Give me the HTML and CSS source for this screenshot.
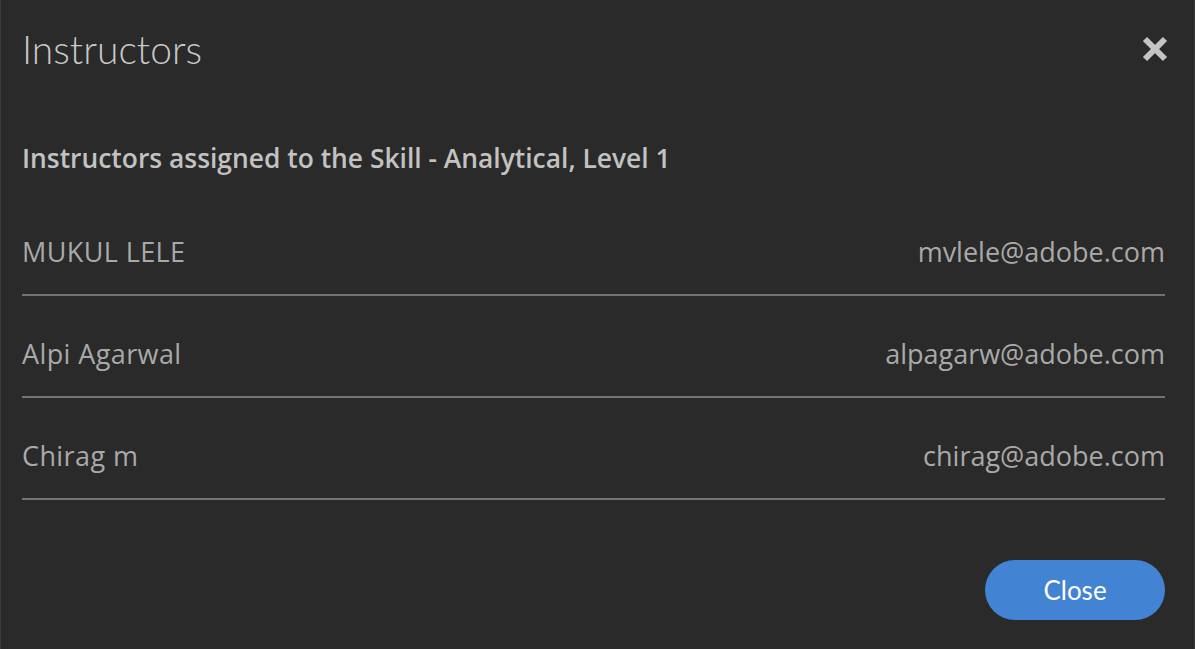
FILE: index.html
```html
<!DOCTYPE html>
<html>
<head>
<meta charset="utf-8">
<link rel="stylesheet" href="styles.css">
</head>
<body>
<div class="dialog">
  <div class="header">
    <h1 class="title">Instructors</h1>
    <button class="close-x" aria-label="Close">
      <svg width="28" height="28" viewBox="0 0 28 28"><path d="M4 4 L24 24 M24 4 L4 24" stroke="#c4c4c4" stroke-width="6" stroke-linecap="butt"/></svg>
    </button>
  </div>
  <p class="subtitle">Instructors assigned to the Skill - Analytical, Level 1</p>
  <ul class="list">
    <li class="row"><span class="name">MUKUL LELE</span><span class="email">mvlele@adobe.com</span></li>
    <li class="row"><span class="name">Alpi Agarwal</span><span class="email">alpagarw@adobe.com</span></li>
    <li class="row"><span class="name">Chirag m</span><span class="email">chirag@adobe.com</span></li>
  </ul>
  <div class="footer">
    <button class="btn-close">Close</button>
  </div>
</div>
</body>
</html>
```
FILE: styles.css
```css
html, body { margin: 0; padding: 0; }
body {
  background: #2a2a2a;
  font-family: "Open Sans", Lato, sans-serif;
  width: 1195px;
  height: 649px;
  overflow: hidden;
}
.dialog {
  box-sizing: border-box;
  width: 1195px;
  height: 649px;
  background: #2a2a2a;
  border-left: 1px solid #3a3a3a;
  border-right: 1px solid #3a3a3a;
  padding: 0 29px 0 21px;
  display: flex;
  flex-direction: column;
}
.header {
  display: flex;
  justify-content: space-between;
  align-items: center;
  height: 98px;
}
.title {
  margin: 0;
  font-family: Lato, sans-serif;
  font-weight: 300;
  font-size: 39px;
  color: #c8c8c8;
}
.close-x {
  background: none;
  border: 0;
  padding: 0;
  margin-right: -4px;
  display: flex;
}
.subtitle {
  margin: 46px 0 0;
  font-weight: 600;
  font-size: 26.4px;
  color: #c2c2c2;
  line-height: 28px;
}
.list {
  list-style: none;
  margin: 22px 0 0;
  padding: 0;
}
.row {
  display: flex;
  justify-content: space-between;
  align-items: flex-end;
  height: 100px;
  border-bottom: 2px solid #727272;
  box-sizing: content-box;
  font-size: 27px;
  color: #a9a9a9;
}
.row span { padding-bottom: 27px; line-height: 30px; }
.row .name { letter-spacing: 0.4px; }
.footer {
  display: flex;
  justify-content: flex-end;
  margin-top: 60px;
}
.btn-close {
  width: 180px;
  height: 60px;
  border-radius: 30px;
  border: 0;
  background: #4283d3;
  color: #ffffff;
  font-family: Lato, "Noto Sans", sans-serif;
  font-size: 26px;
}
```
